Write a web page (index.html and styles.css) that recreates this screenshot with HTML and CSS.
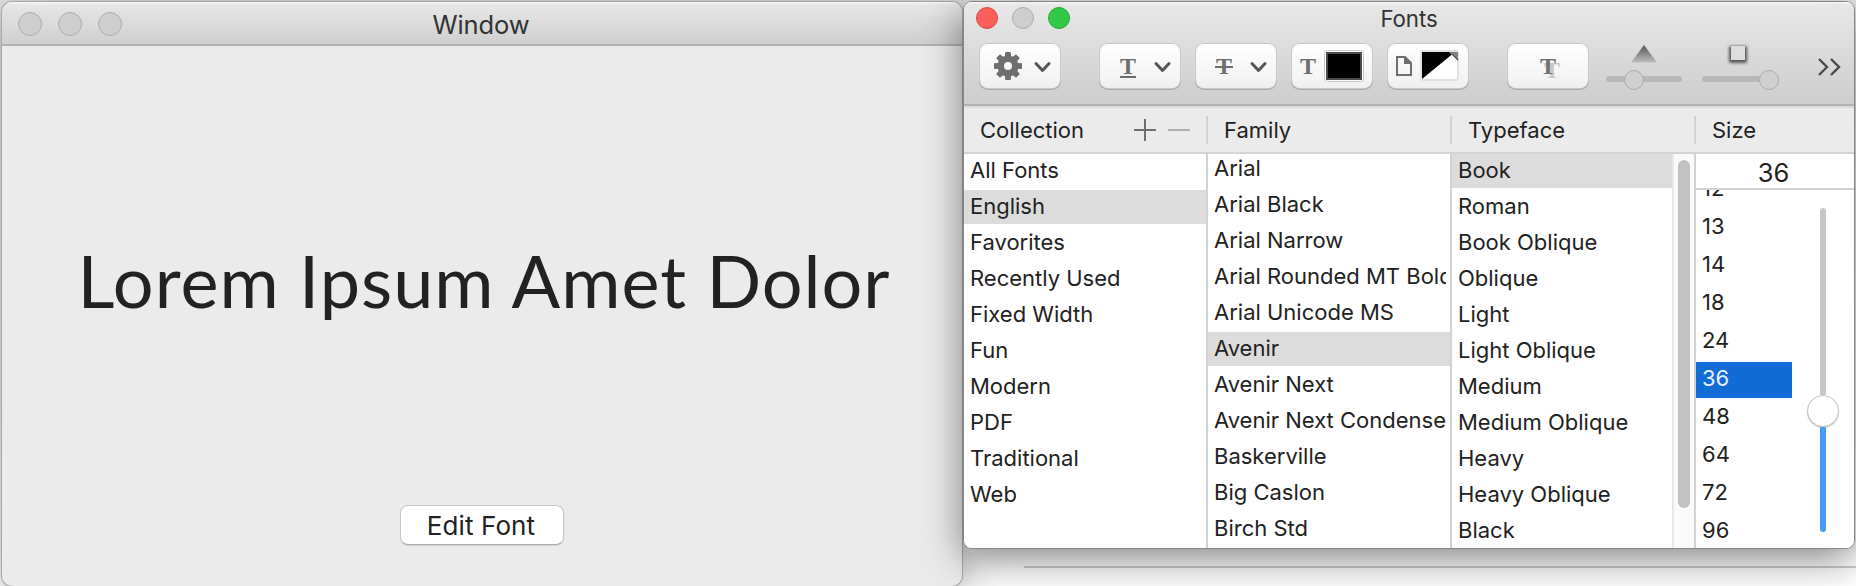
FILE: index.html
```html
<!DOCTYPE html>
<html lang="en">
<head>
<meta charset="utf-8">
<title>Fonts</title>
<link rel="stylesheet" href="styles.css">
</head>
<body>
<div class="desktop">
  <div class="desk-line"></div>
  <main class="window">
    <header class="titlebar">
      <div class="lights"><i class="light"></i><i class="light"></i><i class="light"></i></div>
      <span class="title">Window</span>
    </header>
    <div class="content">
      <div class="sample">Lorem Ipsum Amet Dolor</div>
      <button class="edit">Edit Font</button>
    </div>
  </main>
  <section class="panel">
    <header class="panel-top">
      <div class="panel-title">
        <div class="lights"><i class="light red"></i><i class="light"></i><i class="light green"></i></div>
        <span class="title">Fonts</span>
      </div>
      <div class="toolbar">
        <button class="tool tool-gear">
          <svg width="80" height="44" viewBox="0 0 80 44"><g transform="translate(28 22)" fill="#6f6f6f"><path fill-rule="evenodd" d="M0-10.500A10.500 10.500 0 1 1 0 10.500A10.500 10.500 0 1 1 0-10.500ZM0-4A4 4 0 1 0 0 4A4 4 0 1 0 0-4Z"/><g id="teeth"><path d="M-2.700-14H2.700L3.300-8H-3.300ZM-2.700 14H2.700L3.300 8H-3.300ZM-14-2.700V2.700L-8 3.300V-3.300ZM14-2.700V2.700L8 3.300V-3.300Z"/></g><use href="#teeth" transform="rotate(45)"/></g><path class="chev" d="M56 19.500l6.500 7 6.500-7"/></svg>
        </button>
        <button class="tool">
          <svg width="80" height="44" viewBox="0 0 80 44"><text class="t" x="28" y="30" text-anchor="middle">T</text><path d="M20 33h16" stroke="#6f6f6f" stroke-width="2"/><path class="chev" d="M56 19.500l6.500 7 6.500-7"/></svg>
        </button>
        <button class="tool">
          <svg width="80" height="44" viewBox="0 0 80 44"><text class="t" x="28" y="30" text-anchor="middle">T</text><path d="M19 23h18" stroke="#6f6f6f" stroke-width="2"/><path class="chev" d="M56 19.500l6.500 7 6.500-7"/></svg>
        </button>
        <button class="tool">
          <svg width="80" height="44" viewBox="0 0 80 44"><text class="t" x="16" y="30" text-anchor="middle">T</text><rect x="32.500" y="6.500" width="39" height="31" rx="3" fill="#fff" stroke="#c6c6c6"/><rect x="35" y="9" width="34" height="26" stroke="#4a4a4a" stroke-width="2"/></svg>
        </button>
        <button class="tool">
          <svg width="80" height="44" viewBox="0 0 80 44"><path d="M9 13h8l6 6v12H9z" fill="none" stroke="#6f6f6f" stroke-width="2"/><path d="M16 12v8h8z" fill="#6f6f6f"/><rect x="33" y="7" width="37" height="29" rx="2" fill="#fff" stroke="#e2e2e2" stroke-width="2"/><path d="M34 8h33L34 35z"/><path d="M61 8h9v9z" fill="#858585"/><path d="M64 10l6 6" stroke="#333"/></svg>
        </button>
        <button class="tool tool-shadow">
          <svg width="80" height="44" viewBox="0 0 80 44"><text class="t faint" x="44" y="34" text-anchor="middle">T</text><text class="t" x="40" y="30" text-anchor="middle">T</text></svg>
        </button>
        <svg class="mini" width="78" height="48" viewBox="0 0 78 48"><defs><linearGradient id="tri" x2="0" y2="1"><stop stop-color="#555"/><stop offset="1" stop-color="#bdbdbd"/></linearGradient></defs><path d="M39 1L52 18.500H26Z" fill="url(#tri)"/><rect x="1" y="32" width="76" height="6" rx="3" fill="#b8b8b8"/><circle cx="29" cy="36" r="9.500" fill="#d0d0d0" stroke="#adadad"/></svg>
        <svg class="mini last" width="78" height="48" viewBox="0 0 78 48"><defs><filter id="soft" x="-50%" y="-50%" width="200%" height="200%"><feGaussianBlur stdDeviation="1.500"/></filter></defs><rect x="28" y="2" width="18" height="17" rx="2" fill="#555" filter="url(#soft)"/><rect x="30" y="2" width="14" height="14" fill="#ddd"/><rect x="1" y="32" width="66" height="6" rx="3" fill="#b8b8b8"/><circle cx="68" cy="36" r="9.500" fill="#d0d0d0" stroke="#adadad"/></svg>
        <svg class="more" width="24" height="20" viewBox="0 0 24 20"><path d="M2 2l8 8-8 8M14 2l8 8-8 8" fill="none" stroke="#4a4a4a" stroke-width="2.400"/></svg>
      </div>
    </header>
    <div class="heads">
      <div class="head"><span>Collection</span>
        <svg class="pm" width="56" height="22" viewBox="0 0 56 22"><path d="M0 11h22M11 0v22" stroke="#6e6e6e" stroke-width="2"/><path d="M34 11h22" stroke="#adadad" stroke-width="2"/></svg>
      </div>
      <div class="head"><span>Family</span></div>
      <div class="head"><span>Typeface</span></div>
      <div class="head"><span>Size</span></div>
    </div>
    <div class="lists">
      <ul class="list">
        <li>All Fonts</li><li class="sel">English</li><li>Favorites</li><li>Recently Used</li><li>Fixed Width</li><li>Fun</li><li>Modern</li><li>PDF</li><li>Traditional</li><li>Web</li>
      </ul>
      <ul class="list family">
        <li><span>Arial</span></li><li><span>Arial Black</span></li><li><span>Arial Narrow</span></li><li><span>Arial Rounded MT Bold</span></li><li><span>Arial Unicode MS</span></li><li class="sel"><span>Avenir</span></li><li><span>Avenir Next</span></li><li><span>Avenir Next Condensed</span></li><li><span>Baskerville</span></li><li><span>Big Caslon</span></li><li><span>Birch Std</span></li>
      </ul>
      <div class="faces">
        <ul class="list">
          <li class="sel">Book</li><li>Roman</li><li>Book Oblique</li><li>Oblique</li><li>Light</li><li>Light Oblique</li><li>Medium</li><li>Medium Oblique</li><li>Heavy</li><li>Heavy Oblique</li><li>Black</li>
        </ul>
        <div class="scroll"><div class="thumb"></div></div>
      </div>
      <div class="size">
        <div class="field">36</div>
        <div class="size-body">
          <ul class="sizes">
            <li>12</li><li>13</li><li>14</li><li>18</li><li>24</li><li class="on">36</li><li>48</li><li>64</li><li>72</li><li>96</li>
          </ul>
          <div class="slider"><div class="rail"></div><div class="knob"></div><div class="fill"></div></div>
        </div>
      </div>
    </div>
  </section>
</div>
</body>
</html>
```
FILE: styles.css
```css
* { box-sizing: border-box; }
body { margin: 0; font-family: Inter, "Liberation Sans", sans-serif; font-size: 22px; color: #222; }
ul { margin: 0; padding: 0; list-style: none; }
button { padding: 0; font: inherit; color: inherit; }
svg { display: block; }
.desktop { position: relative; width: 1856px; height: 586px; overflow: hidden; background: linear-gradient(#e9e9e9 0, #e9e9e9 120px, #fff 560px); }
.desk-line { position: absolute; left: 1024px; top: 566px; width: 832px; height: 2px; background: #ccc; }

/* Document window */
.window { position: absolute; left: 2px; top: 2px; width: 960px; height: 584px; border-radius: 10px; background: #ebebeb; overflow: hidden; display: flex; flex-direction: column; box-shadow: 0 0 0 1px #a9a9a9, 0 4px 40px rgba(0,0,0,.4); }
.titlebar { position: relative; height: 44px; flex: none; display: flex; align-items: center; justify-content: center; background: linear-gradient(#e8e8e8, #cfcfcf); border-bottom: 2px solid #b2b2b2; box-shadow: inset 0 2px #f1f1f1; }
.lights { position: absolute; left: 16px; top: 10px; display: flex; gap: 16px; }
.light { width: 24px; height: 24px; border-radius: 50%; background: #cecece; border: 1px solid #adadad; }
.title { padding: 2px 2px 0 0; font-size: 25.5px; letter-spacing: -.1px; color: #333; }
.content { flex: 1; display: flex; flex-direction: column; align-items: center; }
.sample { margin-top: 189px; height: 90px; line-height: 90px; padding-left: 4px; font-family: Lato, sans-serif; font-size: 72px; letter-spacing: 1px; white-space: nowrap; }
.edit { margin-top: 180px; width: 164px; height: 40px; border: 1px solid #c6c6c6; border-bottom-color: #aaa; border-radius: 8px; background: #fff; font-size: 26px; letter-spacing: .1px; padding-right: 2px; box-shadow: 0 1px 1px rgba(0,0,0,.1); }

/* Font panel */
.panel { position: absolute; left: 964px; top: 2px; width: 890px; height: 546px; border-radius: 8px; overflow: hidden; background: #fff; display: flex; flex-direction: column; box-shadow: 0 0 0 1px #888, 0 10px 40px rgba(0,0,0,.5); }
.panel-top { height: 104px; flex: none; background: linear-gradient(#e8e8e8, #cdcdcd); border-bottom: 2px solid #b2b2b2; box-shadow: inset 0 2px #f1f1f1; }
.panel-title { position: relative; height: 32px; display: flex; align-items: center; justify-content: center; }
.panel-title .title { padding: 0; font-size: 22.3px; }
.panel-title .lights { left: 12px; top: 5px; gap: 14px; }
.panel-title .light { width: 22px; height: 22px; }
.light.red { background: #fc605c; border-color: #df4744; }
.light.green { background: #34c84a; border-color: #27a934; }
.toolbar { display: flex; align-items: flex-start; padding: 10px 13px 0 16px; gap: 16px; }
.tool { flex: none; width: 80px; height: 44px; border: 0; border-radius: 8px; background: linear-gradient(#fff, #f0f0f0); box-shadow: 0 0 0 1px #c9c9c9, 0 1px 0 1px #aaa; }
.tool-gear { margin-right: 24px; }
.tool-shadow { margin: 0 1px 0 24px; }
.t { font: bold 24px "Liberation Serif", serif; fill: #6f6f6f; }
.t.faint { fill: #c8c8c8; }
.chev { fill: none; stroke: #555; stroke-width: 3; stroke-linecap: round; stroke-linejoin: round; }
.mini { flex: none; margin-right: 2px; }
.more { margin: 13px 0 0 auto; }
.heads { height: 48px; flex: none; display: grid; grid-template-columns: 244px 244px 244px 1fr; align-items: center; background: #ebebeb; border-top: 2px solid #dcdcdc; border-bottom: 2px solid #d4d4d4; }
.head { height: 28px; display: flex; align-items: center; padding: 0 18px 0 16px; }
.head + .head { box-shadow: -2px 0 #d2d2d2; }
.pm { margin-left: auto; }
.lists { flex: 1; min-height: 0; display: grid; grid-template-columns: 242px 242px 242px 158px; gap: 2px; background: #d2d2d2; }
.list { min-height: 0; overflow: hidden; background: #fff; display: flex; flex-direction: column; gap: 2px; }
.list li { flex: none; height: 34px; line-height: 33px; padding-left: 6px; white-space: nowrap; overflow: hidden; }
.family li { padding-right: 4px; }
.family li span { display: block; overflow: hidden; }
.family li:first-child { height: 32px; line-height: 29px; }
.list .sel { background: #dcdcdc; }
.faces { display: flex; min-height: 0; }
.faces .list { flex: 1; }
.scroll { width: 22px; background: #fafafa; border-left: 2px solid #e8e8e8; padding: 6px 4px; }
.thumb { width: 12px; height: 348px; border-radius: 6px; background: #c1c1c1; }
.size { background: #fff; display: flex; flex-direction: column; min-height: 0; }
.field { height: 36px; flex: none; line-height: 38px; padding-right: 3px; border-bottom: 2px solid #d2d2d2; text-align: center; font-size: 25.5px; }
.size-body { flex: 1; min-height: 0; display: flex; overflow: hidden; }
.sizes { width: 96px; margin-top: -18px; display: flex; flex-direction: column; gap: 2px; }
.sizes li { flex: none; height: 36px; line-height: 33px; padding-left: 6px; }
.sizes .on { background: #116cd6; color: #e8f0fb; }
.slider { margin: 18px 0 0 15px; width: 32px; display: flex; flex-direction: column; align-items: center; }
.rail { width: 6px; height: 187px; border-radius: 3px 3px 0 0; background: #c6c6c6; }
.knob { width: 32px; height: 32px; flex: none; border-radius: 50%; border: 1px solid #c4c4c4; background: #fff; box-shadow: 0 1px 1px rgba(0,0,0,.2); }
.fill { width: 6px; height: 105px; border-radius: 0 0 3px 3px; background: #449dfb; }
```
